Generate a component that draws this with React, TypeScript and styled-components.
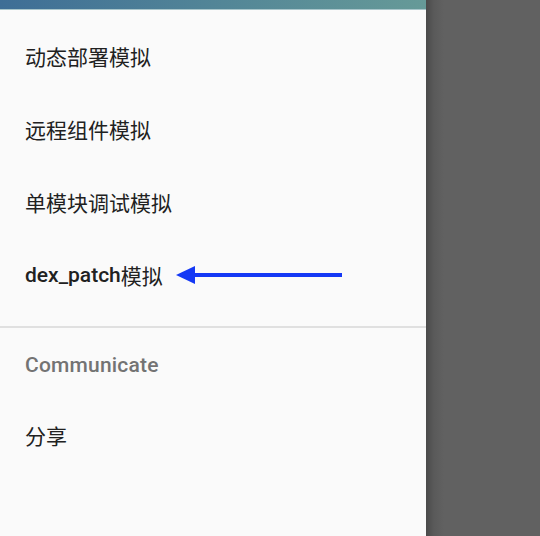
import styled, { createGlobalStyle } from "styled-components";

const GlobalStyle = createGlobalStyle`
  html, body {
    margin: 0;
    padding: 0;
    background: #616161;
  }
  body {
    font-family: Roboto, "Noto Sans CJK SC", sans-serif;
  }
`;

const Screen = styled.div`
  display: flex;
  width: 540px;
  height: 536px;
  overflow: hidden;
`;

const Drawer = styled.nav`
  position: relative;
  width: 426px;
  flex-shrink: 0;
  background: #fafafa;
  display: flex;
  flex-direction: column;
`;

const Header = styled.div`
  height: 9px;
  background: linear-gradient(90deg, #3e6e96 0%, #528597 50%, #669a98 100%);
  border-bottom: 1px solid #a9c6cb;
`;

const Section = styled.ul`
  list-style: none;
  margin: 0;
  padding: 12px 0;
`;

const Item = styled.li<{ $bold?: boolean; $muted?: boolean }>`
  height: 73px;
  box-sizing: border-box;
  display: flex;
  align-items: center;
  padding-left: 25px;
  padding-bottom: ${(p) => (p.$muted ? "0" : "5px")};
  font-size: 21px;
  font-weight: ${(p) => (p.$bold || p.$muted ? 500 : 400)};
  color: ${(p) => (p.$muted ? "#737373" : "#212121")};
  letter-spacing: ${(p) => (p.$muted ? "0.2px" : "0")};
`;

const Cjk = styled.span`
  font-weight: 400;
`;

const Divider = styled.hr`
  margin: 0;
  border: none;
  height: 2px;
  background: #e0e0e0;
`;

const SubSection = styled.ul`
  list-style: none;
  margin: 0;
  padding: 0;
`;

const Scrim = styled.div`
  flex: 1;
  background: linear-gradient(90deg, #4a4a4a 0px, #5a5a5a 8px, #616161 18px, #616161 100%);
`;

const Arrow = styled.svg`
  position: absolute;
  left: 174px;
  top: 264px;
`;

export default function App() {
  return (
    <>
      <GlobalStyle />
      <Screen>
        <Drawer>
          <Header />
          <Section>
            <Item>动态部署模拟</Item>
            <Item>远程组件模拟</Item>
            <Item>单模块调试模拟</Item>
            <Item $bold>
              dex_patch<Cjk>模拟</Cjk>
            </Item>
          </Section>
          <Divider />
          <SubSection>
            <Item $muted>Communicate</Item>
            <Item>分享</Item>
          </SubSection>
          <Arrow width="172" height="24" viewBox="0 0 172 24">
            <line x1="18" y1="11" x2="168" y2="11" stroke="#1438f5" strokeWidth="4" />
            <polygon points="2,11 21,2 21,20" fill="#1438f5" />
          </Arrow>
        </Drawer>
        <Scrim />
      </Screen>
    </>
  );
}
